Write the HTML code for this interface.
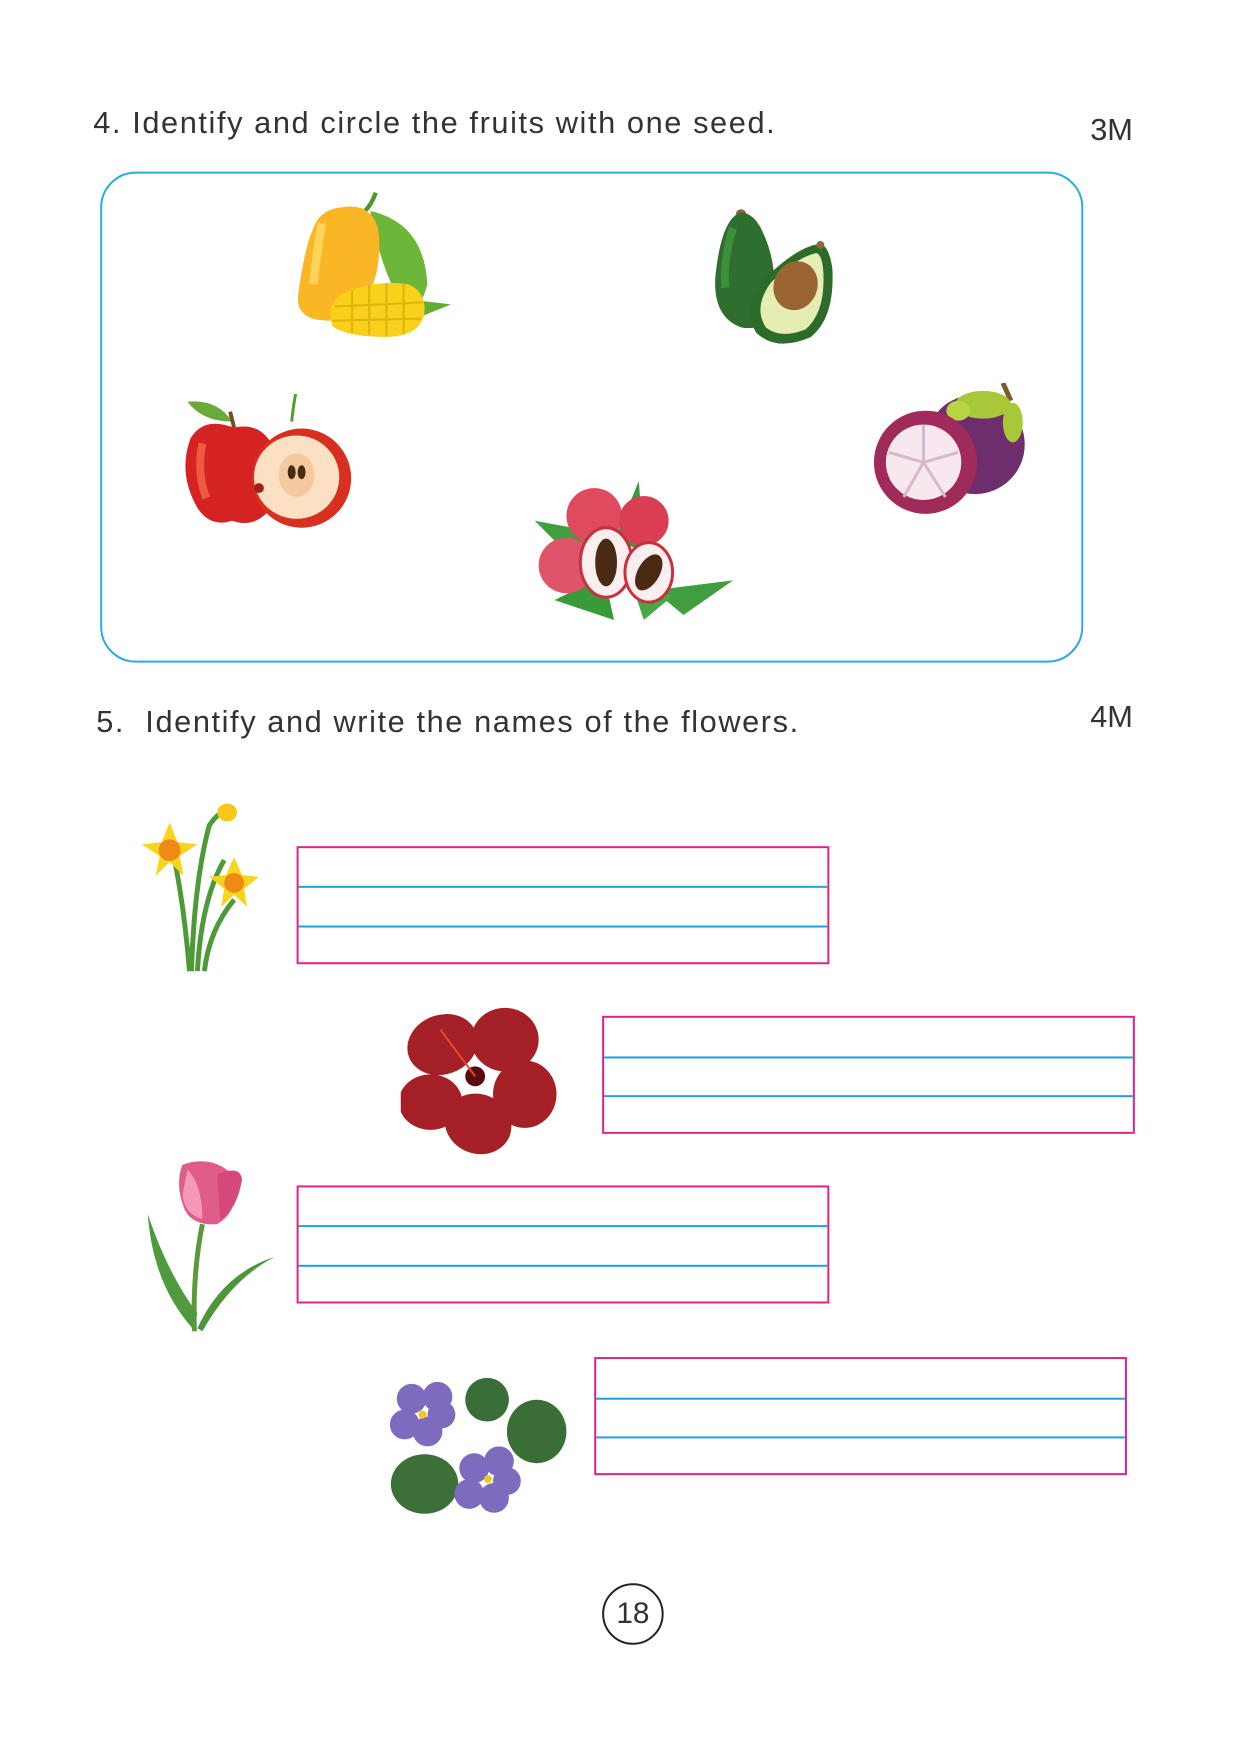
<!DOCTYPE html>
<html><head><meta charset="utf-8"><style>
body{margin:0;background:#fff;}
#w{width:1241px;height:1755px;overflow:hidden;background:#fff;}
#p{position:relative;width:1241px;height:1755px;transform:scale(0.992);transform-origin:0 0;font-family:"Liberation Sans",sans-serif;color:#333;}
.t{position:absolute;font-size:31px;white-space:nowrap;letter-spacing:1.6px;}
.box{position:absolute;border:2px solid #e0218a;box-sizing:border-box;}
.box i{position:absolute;left:0;right:0;height:0;border-top:2px solid #1ba1dc;}
svg{position:absolute;}
</style></head><body><div id="w"><div id="p">
<div class="t" style="left:94px;top:106px;">4. Identify and circle the fruits with one seed.</div>
<div class="t" style="left:1099px;top:113px;letter-spacing:0">3M</div>
<div style="position:absolute;left:101px;top:173px;width:991px;height:495px;border:2px solid #29abe2;border-radius:36px;box-sizing:border-box;"></div>

<!-- mango -->
<svg style="left:292px;top:184px" width="180" height="170" viewBox="0 0 166 166" preserveAspectRatio="none">
<path d="M80 10 Q76 22 70 28" stroke="#4a9a2a" stroke-width="4" fill="none"/>
<path d="M75 28 Q125 40 128 100 Q122 125 110 130 Q85 90 75 28Z" fill="#6cb63a"/>
<path d="M110 115 L150 120 L115 135Z" fill="#5fae34"/>
<path d="M45 25 Q75 18 82 45 Q88 80 70 120 Q60 140 25 135 Q5 130 8 110 Q14 60 25 38 Q32 27 45 25Z" fill="#fbb626"/>
<path d="M30 40 Q25 70 22 100" stroke="#fdd35a" stroke-width="8" fill="none"/>
<path d="M45 112 Q75 95 110 100 Q128 108 125 130 Q120 152 88 152 Q55 152 40 142 Q34 125 45 112Z" fill="#f7d11b"/>
<path d="M58 106 L58 148 M74 101 L74 150 M90 99 L90 151 M106 100 L106 149 M42 122 L124 118 M40 136 L122 134" stroke="#e3b20c" stroke-width="2"/>
</svg>
<!-- avocado -->
<svg style="left:717px;top:210px" width="128" height="142" viewBox="0 0 128 142">
<ellipse cx="30" cy="5" rx="5" ry="4" fill="#8a6a3a"/>
<path d="M30 4 Q10 10 4 70 Q2 110 30 120 Q55 125 60 100 Q70 60 50 20 Q42 5 30 4Z" fill="#2e6e2e"/>
<path d="M22 20 Q12 50 14 80" stroke="#3f8f3a" stroke-width="8" fill="none"/>
<path d="M108 36 Q85 40 55 70 Q30 100 45 125 Q65 145 100 130 Q125 110 122 60 Q118 35 108 36Z" fill="#2d6b2b"/>
<path d="M106 45 Q85 50 60 75 Q42 100 55 120 Q70 132 95 122 Q115 105 113 65 Q112 47 106 45Z" fill="#e6edb4"/>
<ellipse cx="85" cy="78" rx="22" ry="25" fill="#9b6533" transform="rotate(20 85 78)"/>
<ellipse cx="110" cy="37" rx="4" ry="4" fill="#8a6a3a"/>
</svg>
<!-- apple -->
<svg style="left:184px;top:397px" width="176" height="140" viewBox="0 0 176 140">
<path d="M50 28 Q35 5 5 8 Q20 28 50 28Z" fill="#6aaa3a"/>
<path d="M52 34 L48 18" stroke="#7a4a2a" stroke-width="4"/>
<path d="M45 32 Q20 25 8 45 Q-5 80 15 115 Q28 135 50 128 Q70 135 85 120 Q100 90 92 55 Q80 28 52 34Z" fill="#d42320"/>
<path d="M20 50 Q14 80 24 105" stroke="#ef5a3e" stroke-width="8" fill="none"/>
<path d="M110 28 Q112 10 114 0" stroke="#5a9a2a" stroke-width="3" fill="none"/>
<circle cx="120" cy="85" r="50" fill="#d83020"/>
<ellipse cx="115" cy="84" rx="43" ry="42" fill="#fbe0c4"/>
<ellipse cx="115" cy="82" rx="18" ry="22" fill="#f4c9a0"/>
<ellipse cx="110" cy="79" rx="4" ry="7" fill="#4a2a10"/><ellipse cx="120" cy="79" rx="4" ry="7" fill="#4a2a10"/>
<circle cx="77" cy="95" r="5" fill="#a02020"/>
</svg>
<!-- lychee -->
<svg style="left:539px;top:485px" width="204" height="142" viewBox="0 0 204 142">
<path d="M80 60 L105 0 L110 70Z" fill="#3a9a3a"/>
<path d="M0 40 L55 50 L40 80Z" fill="#3f9e3e"/>
<path d="M20 120 L70 95 L80 140Z" fill="#3a9a3a"/>
<path d="M120 110 L200 100 L150 135Z" fill="#3f9e3e"/>
<path d="M100 110 L110 140 L140 115Z" fill="#48a848"/>
<circle cx="60" cy="35" r="28" fill="#e04a5e"/>
<circle cx="110" cy="40" r="25" fill="#d93e54"/>
<circle cx="32" cy="85" r="28" fill="#e05468"/>
<ellipse cx="72" cy="82" rx="26" ry="35" fill="#fbeeee" stroke="#c8303e" stroke-width="3"/>
<ellipse cx="72" cy="82" rx="11" ry="24" fill="#4a2a14"/>
<ellipse cx="115" cy="92" rx="24" ry="30" fill="#fbeeee" stroke="#c8303e" stroke-width="3"/>
<ellipse cx="115" cy="92" rx="11" ry="20" fill="#4a2a14" transform="rotate(30 115 92)"/>
</svg>
<!-- mangosteen -->
<svg style="left:871px;top:386px" width="176" height="134" viewBox="0 0 176 134">
<circle cx="112" cy="62" r="50" fill="#6e2e6e"/>
<path d="M140 0 L148 18" stroke="#7a5a2a" stroke-width="5"/>
<ellipse cx="120" cy="22" rx="28" ry="14" fill="#a8c83a"/>
<ellipse cx="150" cy="40" rx="10" ry="20" fill="#a8c83a"/>
<ellipse cx="95" cy="28" rx="12" ry="10" fill="#b8d440"/>
<circle cx="62" cy="80" r="52" fill="#a02a5a"/>
<circle cx="60" cy="80" r="38" fill="#f7e8f0"/>
<path d="M60 80 L60 42 M60 80 L25 70 M60 80 L95 70 M60 80 L40 115 M60 80 L82 115" stroke="#d7b8cc" stroke-width="3"/>
</svg>

<div class="t" style="left:97px;top:710px;">5.&nbsp; Identify and write the names of the flowers.</div>
<div class="t" style="left:1099px;top:705px;letter-spacing:0">4M</div>

<div class="box" style="left:299px;top:853px;width:537px;height:119px"><i style="top:38px"></i><i style="top:78px"></i></div>
<div class="box" style="left:607px;top:1024px;width:537px;height:119px"><i style="top:39px"></i><i style="top:78px"></i></div>
<div class="box" style="left:299px;top:1195px;width:537px;height:119px"><i style="top:38px"></i><i style="top:78px"></i></div>
<div class="box" style="left:599px;top:1368px;width:537px;height:119px"><i style="top:39px"></i><i style="top:78px"></i></div>

<!-- daffodil -->
<svg style="left:141px;top:807px" width="120" height="174" viewBox="0 0 120 174">
<path d="M50 172 Q45 110 35 60 M58 172 Q62 100 85 60 M52 172 Q55 80 70 25 Q80 10 90 10 M65 172 Q70 130 95 100" stroke="#4e9a38" stroke-width="5" fill="none"/>
<ellipse cx="88" cy="12" rx="10" ry="9" fill="#f5c81a"/>
<g transform="translate(30 50)"><path d="M0 -28 L8 -8 L28 -6 L10 6 L14 26 L0 12 L-14 26 L-10 6 L-28 -6 L-8 -8Z" fill="#f7d51c"/><circle r="11" fill="#f08a16"/></g>
<g transform="translate(95 83)"><path d="M0 -26 L8 -8 L25 -6 L10 6 L13 24 L0 12 L-13 24 L-10 6 L-25 -6 L-8 -8Z" fill="#f7d51c"/><circle r="10" fill="#f08a16"/></g>
</svg>
<!-- hibiscus -->
<svg style="left:404px;top:1013px" width="160" height="152" viewBox="0 0 160 152">
<g fill="#a51f27">
<ellipse cx="42" cy="40" rx="36" ry="30" transform="rotate(-20 42 40)"/>
<ellipse cx="105" cy="35" rx="34" ry="32"/>
<ellipse cx="125" cy="90" rx="32" ry="34"/>
<ellipse cx="78" cy="120" rx="34" ry="30" transform="rotate(20 78 120)"/>
<ellipse cx="30" cy="98" rx="32" ry="28"/>
</g>
<circle cx="75" cy="72" r="10" fill="#5a0a10"/>
<path d="M75 72 L40 25" stroke="#e64a2a" stroke-width="2"/>
</svg>
<!-- tulip -->
<svg style="left:144px;top:1164px" width="135" height="180" viewBox="0 0 135 180">
<path d="M52 178 Q50 120 60 70" stroke="#5a9a3a" stroke-width="5" fill="none"/>
<path d="M50 175 Q10 130 5 60 Q25 120 55 160Z" fill="#4f9a3c"/>
<path d="M55 175 Q80 120 133 103 Q90 125 60 178Z" fill="#4e963a"/>
<path d="M40 10 Q70 0 90 20 Q100 55 75 70 Q50 72 42 55 Q32 30 40 10Z" fill="#e05c8a"/>
<path d="M45 15 Q60 30 60 65 Q42 60 40 40Z" fill="#f49ab8"/>
<path d="M75 20 Q98 10 100 25 Q95 55 78 66Z" fill="#d5487a"/>
</svg>
<!-- violet -->
<svg style="left:393px;top:1388px" width="178" height="142" viewBox="0 0 178 142">
<ellipse cx="98" cy="23" rx="22" ry="22" fill="#3a6e38"/>
<ellipse cx="148" cy="55" rx="30" ry="32" fill="#3b6d37"/>
<ellipse cx="35" cy="108" rx="34" ry="30" fill="#3d7038"/>
<g fill="#7e6bc0">
<circle cx="22" cy="22" r="15"/><circle cx="48" cy="20" r="15"/><circle cx="15" cy="48" r="15"/><circle cx="38" cy="55" r="15"/><circle cx="52" cy="38" r="14"/>
<circle cx="85" cy="92" r="15"/><circle cx="110" cy="85" r="15"/><circle cx="80" cy="118" r="15"/><circle cx="105" cy="122" r="15"/><circle cx="118" cy="105" r="14"/>
</g>
<circle cx="33" cy="38" r="4" fill="#f0c820"/><circle cx="99" cy="103" r="4" fill="#f0c820"/>
</svg>

<div style="position:absolute;left:607px;top:1596px;width:62px;height:62px;border:2px solid #222;border-radius:50%;box-sizing:border-box;font-size:30px;text-align:center;line-height:58px;color:#333;">18</div>
</div></div></body></html>
